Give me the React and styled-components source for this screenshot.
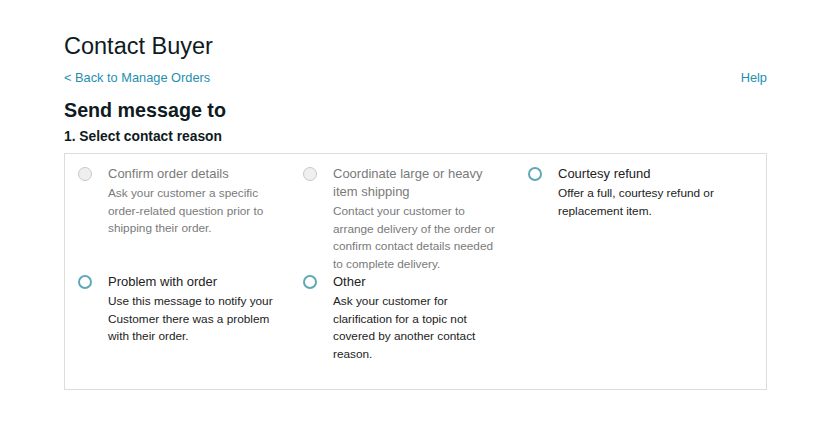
import React from "react";
import styled, { createGlobalStyle } from "styled-components";

const Global = createGlobalStyle`
  html, body { margin: 0; padding: 0; background: #fff; }
  body { font-family: "Liberation Sans", Arial, sans-serif; color: #111; }
`;

const Page = styled.div`
  width: 703px;
  margin-left: 64px;
  padding-top: 32px;
`;

const Title = styled.h1`
  margin: 0;
  font-size: 23.5px;
  line-height: 28px;
  font-weight: 400;
  color: #0f1b22;
`;

const NavRow = styled.div`
  display: flex;
  justify-content: space-between;
  margin-top: 10px;
  font-size: 12.8px;
  line-height: 16px;
`;

const Link = styled.a`
  color: #1f8fb0;
  text-decoration: none;
  cursor: pointer;
`;

const Heading = styled.h2`
  margin: 12px 0 0;
  font-size: 19.7px;
  line-height: 24px;
  font-weight: 700;
  color: #0f1b22;
`;

const Step = styled.h3`
  margin: 6px 0 0;
  font-size: 13.8px;
  line-height: 18px;
  font-weight: 700;
  color: #0f1b22;
`;

const Box = styled.div`
  margin-top: 7px;
  border: 1px solid #dcdcdc;
  padding: 11px 13px 26px;
  display: grid;
  grid-template-columns: repeat(3, 225px);
`;

const Option = styled.label`
  display: flex;
  gap: 16px;
  align-items: flex-start;
  cursor: ${(p) => (p.$disabled ? "default" : "pointer")};
`;

const Radio = styled.span`
  flex: none;
  box-sizing: border-box;
  width: 14px;
  height: 14px;
  margin-top: 2px;
  border-radius: 50%;
  border: ${(p) => (p.$disabled ? "1px solid #c8c8c8" : "2px solid #5fa8b5")};
  background: ${(p) => (p.$disabled ? "#efefef" : "#fff")};
`;

const Text = styled.div`
  width: 170px;
`;

const Label = styled.div`
  font-size: 13px;
  line-height: 18px;
  color: ${(p) => (p.$disabled ? "#7a7a7a" : "#222")};
`;

const Desc = styled.div`
  margin-top: 2px;
  font-size: 11.8px;
  line-height: 17.5px;
  color: ${(p) => (p.$disabled ? "#7a7a7a" : "#222")};
`;

const options = [
  {
    label: "Confirm order details",
    desc: "Ask your customer a specific order-related question prior to shipping their order.",
    disabled: true,
  },
  {
    label: "Coordinate large or heavy item shipping",
    desc: "Contact your customer to arrange delivery of the order or confirm contact details needed to complete delivery.",
    disabled: true,
  },
  {
    label: "Courtesy refund",
    desc: "Offer a full, courtesy refund or replacement item.",
  },
  {
    label: "Problem with order",
    desc: "Use this message to notify your Customer there was a problem with their order.",
  },
  {
    label: "Other",
    desc: "Ask your customer for clarification for a topic not covered by another contact reason.",
  },
];

export default function App() {
  return (
    <>
      <Global />
      <Page>
        <Title>Contact Buyer</Title>
        <NavRow>
          <Link>&lt; Back to Manage Orders</Link>
          <Link>Help</Link>
        </NavRow>
        <Heading>Send message to</Heading>
        <Step>1. Select contact reason</Step>
        <Box>
          {options.map((o) => (
            <Option key={o.label} $disabled={o.disabled}>
              <Radio $disabled={o.disabled} />
              <Text>
                <Label $disabled={o.disabled}>{o.label}</Label>
                <Desc $disabled={o.disabled}>{o.desc}</Desc>
              </Text>
            </Option>
          ))}
        </Box>
      </Page>
    </>
  );
}
